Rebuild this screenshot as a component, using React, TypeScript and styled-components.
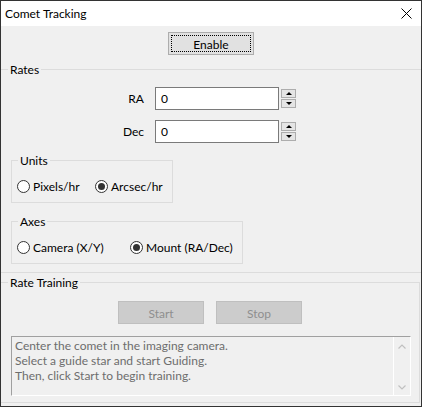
import React from 'react'
import styled, { createGlobalStyle } from 'styled-components'

const GlobalStyle = createGlobalStyle`
  html, body {
    margin: 0;
    padding: 0;
    background: #ffffff;
  }
  body {
    font-family: Lato, "Liberation Sans", Arial, sans-serif;
    font-size: 12px;
    color: #000000;
  }
`

const Window = styled.div`
  width: 422px;
  height: 407px;
  box-sizing: border-box;
  border: 1px solid #333333;
  display: flex;
  flex-direction: column;
  background: #f0f0f0;
`

const TitleBar = styled.div`
  height: 25px;
  background: #ffffff;
  display: flex;
  align-items: center;
  justify-content: space-between;
  padding: 0 9px 0 4px;
  line-height: 15px;
`

const CloseIcon = () => (
  <svg width="11" height="11" viewBox="0 0 11 11">
    <path d="M0.5 0.5 L10.5 10.5 M10.5 0.5 L0.5 10.5" stroke="#000" strokeWidth="1" />
  </svg>
)

const Content = styled.div`
  flex: 1;
  display: flex;
  flex-direction: column;
  line-height: 15px;
`

const CenterRow = styled.div<{ $top: number; $gap?: number }>`
  display: flex;
  justify-content: center;
  gap: ${(p) => p.$gap || 0}px;
  margin-top: ${(p) => p.$top}px;
`

const Button = styled.button<{ $focused?: boolean }>`
  width: 86px;
  height: 23px;
  box-sizing: border-box;
  font: inherit;
  padding: 1px 0 0;
  background: ${(p) => (p.$focused ? '#e1e1e1' : '#cccccc')};
  border: 1px solid ${(p) => (p.$focused ? '#adadad' : '#bfbfbf')};
  color: ${(p) => (p.$focused ? '#000000' : '#8f8f8f')};
  outline: ${(p) => (p.$focused ? '1px dotted #000000' : 'none')};
  outline-offset: -4px;
`

const Section = styled.div<{ $top: number; $height: number; $right?: boolean }>`
  position: relative;
  box-sizing: border-box;
  height: ${(p) => p.$height}px;
  margin-top: ${(p) => p.$top}px;
  margin-right: ${(p) => (p.$right ? 1 : 0)}px;
  border-top: 1px solid #dcdcdc;
  border-bottom: 1px solid #dcdcdc;
  border-right: ${(p) => (p.$right ? '1px solid #dcdcdc' : 'none')};
  display: flex;
  flex-direction: column;
`

const Caption = styled.span<{ $left: number }>`
  position: absolute;
  top: -8px;
  left: ${(p) => p.$left}px;
  padding: 0 2px;
  background: #f0f0f0;
  line-height: 15px;
`

const FieldRow = styled.div<{ $top: number }>`
  display: flex;
  align-items: center;
  margin-top: ${(p) => p.$top}px;
`

const FieldLabel = styled.label`
  width: 143px;
  text-align: right;
  margin-right: 11px;
`

const NumberBox = styled.div`
  width: 124px;
  height: 23px;
  box-sizing: border-box;
  border: 1px solid #7a7a7a;
  background: #ffffff;
  padding-left: 5px;
  display: flex;
  align-items: center;
`

const Spinner = styled.div`
  display: flex;
  flex-direction: column;
  gap: 1px;
  margin-left: 2px;
`

const SpinButton = styled.div<{ $down?: boolean }>`
  width: 15px;
  height: 9px;
  box-sizing: border-box;
  border: 1px solid #adadad;
  background: #e5e5e5;
  display: flex;
  align-items: center;
  justify-content: center;

  &::after {
    content: '';
    border-left: 3px solid transparent;
    border-right: 3px solid transparent;
    ${(p) => (p.$down ? 'border-top: 3px solid #000;' : 'border-bottom: 3px solid #000;')}
  }
`

const Group = styled.div<{ $top: number; $width: number }>`
  position: relative;
  box-sizing: border-box;
  width: ${(p) => p.$width}px;
  height: 43px;
  margin: ${(p) => p.$top}px 0 0 10px;
  border: 1px solid #dcdcdc;
  padding: 18px 0 0 5px;
  display: flex;
  align-items: center;
  align-content: flex-start;
  flex-wrap: wrap;
`

const RadioOption = styled.div<{ $width?: number }>`
  display: flex;
  align-items: center;
  height: 15px;
  width: ${(p) => (p.$width ? `${p.$width}px` : 'auto')};
  gap: 3px;
`

const RadioCircle = styled.span<{ $checked?: boolean }>`
  width: 13px;
  height: 13px;
  box-sizing: border-box;
  border: 1px solid #333333;
  border-radius: 50%;
  background: #ffffff;
  display: flex;
  align-items: center;
  justify-content: center;

  &::after {
    content: '';
    width: 7px;
    height: 7px;
    border-radius: 50%;
    background: ${(p) => (p.$checked ? '#333333' : 'transparent')};
  }
`

const MessageBox = styled.div`
  width: 400px;
  height: 60px;
  box-sizing: border-box;
  margin: 12px 0 0 10px;
  border-top: 1px solid #a0a0a0;
  border-left: 1px solid #a0a0a0;
  border-right: 1px solid #ffffff;
  border-bottom: 1px solid #ffffff;
  display: flex;
  color: #6d6d6d;
`

const MessageText = styled.div`
  flex: 1;
  padding: 1px 0 0 3px;
  line-height: 15px;
`

const ScrollTrack = styled.div`
  width: 16px;
  border-left: 1px solid #ffffff;
  display: flex;
  flex-direction: column;
  justify-content: space-between;
  align-items: center;
  padding: 7px 0 5px;
`

const Chevron = ({ down }: { down?: boolean }) => (
  <svg width="8" height="5" viewBox="0 0 8 5">
    <path
      d={down ? 'M0.5 0.5 L4 4 L7.5 0.5' : 'M0.5 4.5 L4 1 L7.5 4.5'}
      stroke="#c0c0c0"
      strokeWidth="1.2"
      fill="none"
    />
  </svg>
)

const App = () => {
  return (
    <>
      <GlobalStyle />
      <Window>
        <TitleBar>
          <span>Comet Tracking</span>
          <CloseIcon />
        </TitleBar>
        <Content>
          <CenterRow $top={6}>
            <Button $focused>Enable</Button>
          </CenterRow>

          <Section $top={14} $height={204}>
            <Caption $left={7}>Rates</Caption>
            <FieldRow $top={17}>
              <FieldLabel>RA</FieldLabel>
              <NumberBox>0</NumberBox>
              <Spinner>
                <SpinButton />
                <SpinButton $down />
              </Spinner>
            </FieldRow>
            <FieldRow $top={10}>
              <FieldLabel>Dec</FieldLabel>
              <NumberBox>0</NumberBox>
              <Spinner>
                <SpinButton />
                <SpinButton $down />
              </Spinner>
            </FieldRow>

            <Group $top={17} $width={162}>
              <Caption $left={6}>Units</Caption>
              <RadioOption $width={78}>
                <RadioCircle />
                Pixels/hr
              </RadioOption>
              <RadioOption>
                <RadioCircle $checked />
                Arcsec/hr
              </RadioOption>
            </Group>

            <Group $top={18} $width={232}>
              <Caption $left={6}>Axes</Caption>
              <RadioOption $width={113}>
                <RadioCircle />
                Camera (X/Y)
              </RadioOption>
              <RadioOption>
                <RadioCircle $checked />
                Mount (RA/Dec)
              </RadioOption>
            </Group>
          </Section>

          <Section $top={9} $height={121} $right>
            <Caption $left={7}>Rate Training</Caption>
            <CenterRow $top={18} $gap={12}>
              <Button disabled>Start</Button>
              <Button disabled>Stop</Button>
            </CenterRow>
            <MessageBox>
              <MessageText>
                Center the comet in the imaging camera.
                <br />
                Select a guide star and start Guiding.
                <br />
                Then, click Start to begin training.
              </MessageText>
              <ScrollTrack>
                <Chevron />
                <Chevron down />
              </ScrollTrack>
            </MessageBox>
          </Section>
        </Content>
      </Window>
    </>
  )
}

export default App
